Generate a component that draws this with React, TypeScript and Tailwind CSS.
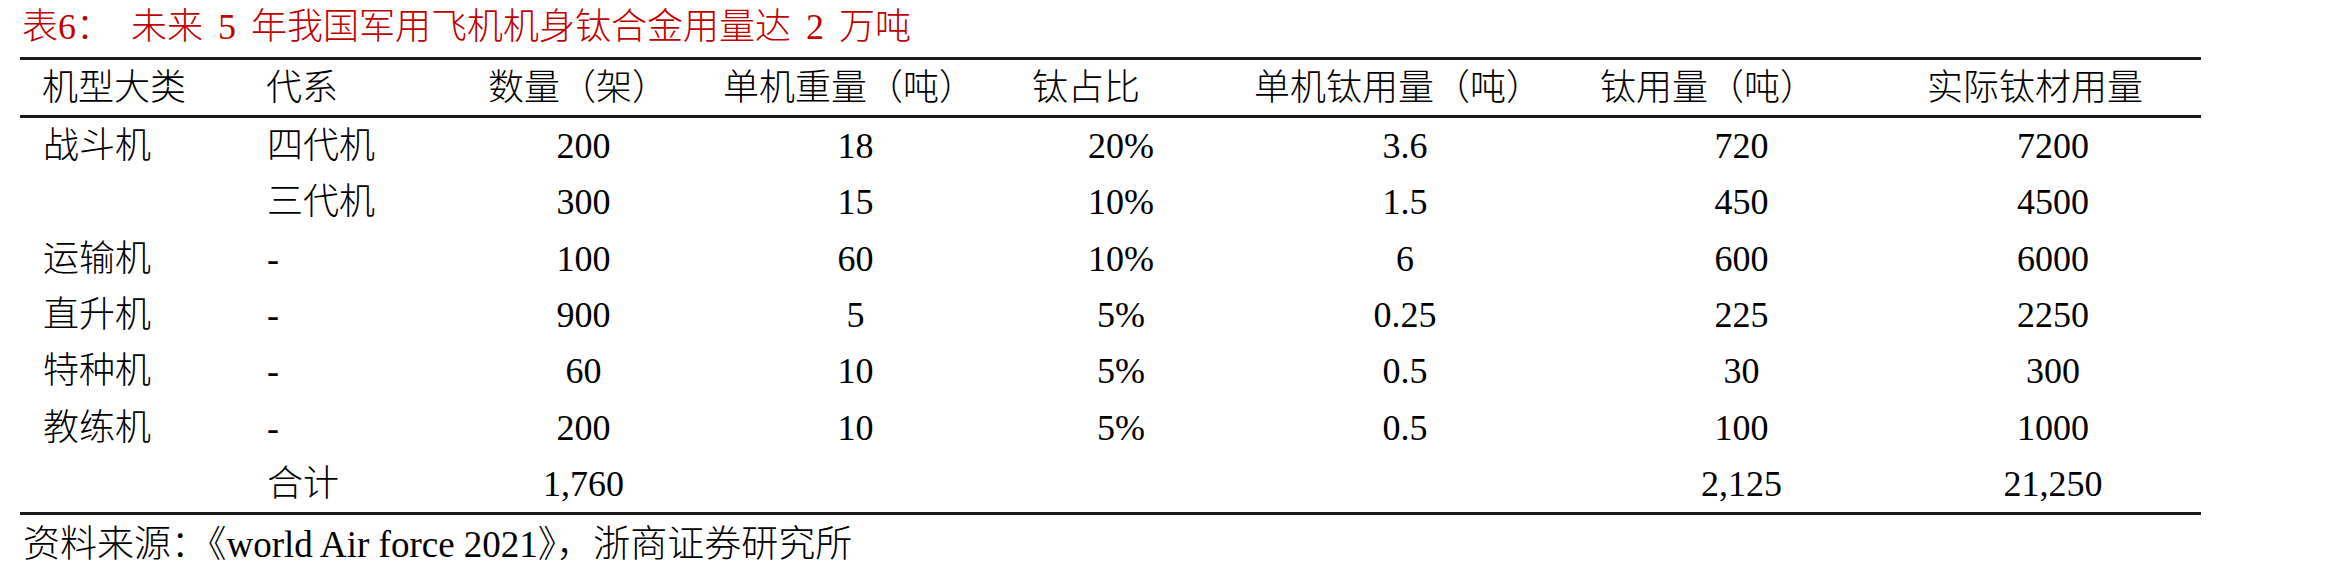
import React from "react";

const cols = "grid grid-cols-[224px_222px_235px_309px_222px_346px_327px_296px]";

const headers = [
  "机型大类",
  "代系",
  "数量（架）",
  "单机重量（吨）",
  "钛占比",
  "单机钛用量（吨）",
  "钛用量（吨）",
  "实际钛材用量",
];

const rows: string[][] = [
  ["战斗机", "四代机", "200", "18", "20%", "3.6", "720", "7200"],
  ["", "三代机", "300", "15", "10%", "1.5", "450", "4500"],
  ["运输机", "-", "100", "60", "10%", "6", "600", "6000"],
  ["直升机", "-", "900", "5", "5%", "0.25", "225", "2250"],
  ["特种机", "-", "60", "10", "5%", "0.5", "30", "300"],
  ["教练机", "-", "200", "10", "5%", "0.5", "100", "1000"],
  ["", "合计", "1,760", "", "", "", "2,125", "21,250"],
];

export default function App() {
  return (
    <div
      className="w-[2330px] h-[579px] bg-white text-black flex flex-col font-light"
      style={{ fontFamily: '"Liberation Serif", "Noto Sans CJK SC", serif' }}
    >
      {/* Title */}
      <div className="h-[57px] flex items-center pl-[22px] pb-[4px] text-[36px] leading-none text-[#c00000]">
        <span>表6：</span>
        <span className="ml-[19px] whitespace-pre [word-spacing:6px]">
          未来 5 年我国军用飞机机身钛合金用量达 2 万吨
        </span>
      </div>

      {/* Table */}
      <div className="ml-[20px] w-[2181px]">
        <div className="h-[3px] bg-[#1a1a1a]" />
        <div className={`${cols} h-[55px] items-center text-[36px] leading-none`}>
          {headers.map((h) => (
            <div key={h} className="pl-[22px] whitespace-nowrap">
              {h}
            </div>
          ))}
        </div>
        <div className="h-[3px] bg-[#1a1a1a]" />
        {rows.map((r, i) => (
          <div key={i} className={`${cols} h-[56.3px] items-center text-[36px] leading-none`}>
            {r.map((c, j) => (
              <div
                key={j}
                className={j < 2 ? "pl-[23px] whitespace-nowrap" : "text-center whitespace-nowrap"}
              >
                {c}
              </div>
            ))}
          </div>
        ))}
        <div className="h-[3px] bg-[#1a1a1a]" />
      </div>

      {/* Source */}
      <div className="pl-[23px] pt-[11px] text-[37px] leading-none whitespace-nowrap">
        资料来源：《world Air force 2021》，浙商证券研究所
      </div>
    </div>
  );
}
